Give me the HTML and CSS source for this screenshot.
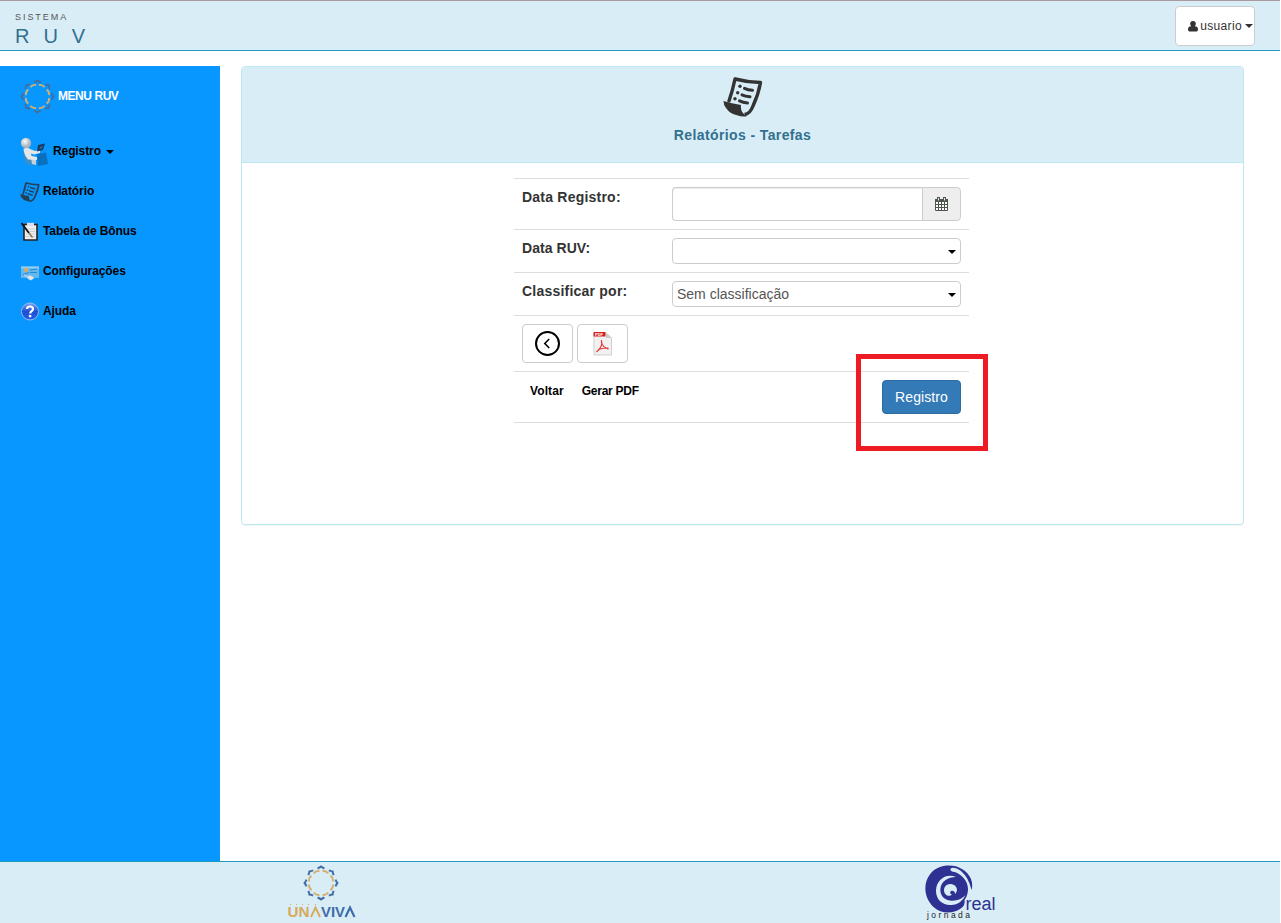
FILE: index.html
```html
<!DOCTYPE html>
<html lang="pt-BR">
<head>
<meta charset="utf-8">
<title>Sistema RUV</title>
<link rel="stylesheet" href="styles.css">
</head>
<body>
<svg class="defs" width="0" height="0" aria-hidden="true">
  <symbol id="ring" viewBox="-18 -18 36 36">
    <g fill="none">
      <g class="ring-blue">
        <path id="ob" d="M-3.400-14.500 Q-1-15.500 0-16.400 Q1-15.500 3.400-14.500"/>
        <use href="#ob" transform="rotate(45)"/><use href="#ob" transform="rotate(90)"/><use href="#ob" transform="rotate(135)"/><use href="#ob" transform="rotate(180)"/><use href="#ob" transform="rotate(225)"/><use href="#ob" transform="rotate(270)"/><use href="#ob" transform="rotate(315)"/>
      </g>
      <g class="ring-gold" transform="rotate(22.5)">
        <path id="ig" d="M-3.100-11.500 Q0-13.500 3.100-11.500"/>
        <use href="#ig" transform="rotate(45)"/><use href="#ig" transform="rotate(90)"/><use href="#ig" transform="rotate(135)"/><use href="#ig" transform="rotate(180)"/><use href="#ig" transform="rotate(225)"/><use href="#ig" transform="rotate(270)"/><use href="#ig" transform="rotate(315)"/>
      </g>
    </g>
  </symbol>
  <symbol id="scroll" viewBox="0 0 40 40">
    <path d="M12 2 Q24 5.200 37.500 5.500 Q35.500 17 30 29 Q27 37 21.500 37.500" fill="none" stroke="currentColor" stroke-width="3.400" stroke-linejoin="round"/>
    <path d="M12 2 Q9.500 14 6 24" fill="none" stroke="currentColor" stroke-width="3.400" stroke-linecap="round"/>
    <path d="M0.500 24 Q8 26.500 18 28 Q17 36 24 39 Q20 40.500 14 38.200 Q7 37 3 31 Q0.500 28 0.500 24Z" fill="currentColor"/>
    <path d="M21.500 11.300 Q25 13 29.500 13.300 M19 17.800 Q22 19.300 27 19.800 M16.500 23.800 Q20 25.500 24.500 26" fill="none" stroke="currentColor" stroke-width="3" stroke-linecap="round"/>
    <g fill="currentColor"><circle cx="17" cy="9.300" r="1.700"/><circle cx="14.700" cy="15.800" r="1.700"/><circle cx="12" cy="21.800" r="1.700"/></g>
  </symbol>
</svg>

<header class="topbar">
  <div class="brand">
    <div class="brand-small">SISTEMA</div>
    <div class="brand-big">R U V</div>
  </div>
  <button class="user">
    <svg width="10" height="11" viewBox="0 0 10 11"><path d="M5 0C7.200 0 8 1.500 7.800 3.100C7.700 4.200 7.200 4.900 6.800 5.300Q10 5.400 10 8.500Q10 10.500 8.500 10.500H1.500Q0 10.500 0 8.500Q0 5.400 3.200 5.300C2.800 4.900 2.300 4.200 2.200 3.100C2 1.500 2.800 0 5 0Z" fill="#333"/></svg>
    <span>usuario</span><i class="caret"></i>
  </button>
</header>

<div class="content">
  <nav class="sidebar">
    <a class="menu-title"><svg width="35" height="35"><use href="#ring"/></svg><span>MENU RUV</span></a>
    <a class="item registro">
      <svg width="30" height="30" viewBox="0 0 30 30">
        <defs><radialGradient id="skin" cx=".4" cy=".35"><stop offset="0" stop-color="#fff"/><stop offset="1" stop-color="#aab4bd"/></radialGradient></defs>
        <path d="M2 13 L6 27 L14 28 L13 23 L8 21Z" fill="#3d8fc8"/>
        <path d="M17 17 L26 15.500 L28 27 L18 29Z" fill="#0870bd"/>
        <path d="M11 21 L16 22 L16 28 L12 27Z" fill="#c7d0d7"/>
        <path d="M3.500 12 Q7 9.500 10 12 L15 14 L20 13 V16 L14 17.500 L11 16.500 L11.500 19 L17 20 V23 L8 22.500Q4 18 3.500 12Z" fill="#e4e7ea"/>
        <path d="M18 8 L25 6.500 L23 13 L17 14.500Z" fill="#1b3c60"/><path d="M20 9.800 L23 9 L22 11.500 L19.500 12Z" fill="#2f6590"/>
        <circle cx="6" cy="6" r="5.200" fill="url(#skin)"/>
      </svg>
      <span>Registro</span><i class="caret"></i>
    </a>
    <a class="item"><svg class="dark" width="20" height="20"><use href="#scroll"/></svg><span>Relatório</span></a>
    <a class="item"><svg width="20" height="20" viewBox="0 0 20 20">
      <path d="M4 2.500H17V18H4Z" fill="#eee" stroke="#222" stroke-width="1.600"/>
      <path d="M7 .8H14V4H7Z" fill="#dde"/><path d="M6 7H15M6 9.500H15M6 12H15M6 14.500H15" stroke="#ccd0d5"/>
      <path d="M1.500 1L9 11" stroke="#111" stroke-width="1.800"/><path d="M9 11L12.500 15.500" stroke="#8b7650" stroke-width="1.400"/>
    </svg><span>Tabela de Bônus</span></a>
    <a class="item"><svg width="20" height="20" viewBox="0 0 20 20">
      <path d="M1 4.500H19V16H1Z" fill="#65b8ed"/><path d="M1 4.500H19V6.500H1Z" fill="#8fcdf4"/>
      <circle cx="6" cy="8" r="1.900" fill="#e2ac46"/><path d="M10 8L17 7M10 10.500H17M3 12.500L9 10.500" stroke="#2489d0" stroke-width="1"/>
      <path d="M7 16Q7 14 10 13.500Q13 14 14 16.500L10.500 18.500Z" fill="#e0e5e8"/><path d="M4 13L8 15" stroke="#a9cde4" stroke-width="1.500"/>
    </svg><span>Configurações</span></a>
    <a class="item"><svg width="20" height="20" viewBox="0 0 20 20">
      <defs><linearGradient id="help" x2="0" y2="1"><stop offset="0" stop-color="#7ba6f5"/><stop offset=".5" stop-color="#1c4fd0"/><stop offset="1" stop-color="#235fe9"/></linearGradient></defs>
      <circle cx="10" cy="9.500" r="8.500" fill="url(#help)" stroke="#94b8ef"/>
      <path d="M7 7Q7 4.500 10 4.500Q13 4.500 13 7Q13 8.300 11.500 9.200Q10.200 10 10.200 11.500" fill="none" stroke="#fff" stroke-width="2.200"/><circle cx="10.100" cy="14.100" r="1.400" fill="#fff"/>
    </svg><span>Ajuda</span></a>
  </nav>

  <main class="main">
    <section class="panel">
      <div class="panel-heading">
        <svg width="40" height="40"><use href="#scroll"/></svg>
        <h1>Relatórios - Tarefas</h1>
      </div>
      <div class="panel-body">
        <div class="form">
          <div class="row"><label>Data Registro:</label>
            <div class="group"><div class="input"></div><div class="addon">
              <svg width="14" height="15" viewBox="0 0 14 15"><path d="M0.500 3.500H12.500V13.500H0.500Z" fill="#fff" stroke="#4c564c"/><path d="M0 2H13V5H0Z" fill="#4c564c"/><path d="M3.500 5V14M6.500 5V14M9.500 5V14M0 7.500H13M0 10.500H13" stroke="#4c564c"/><path d="M3.500 0V3.500M9.500 0V3.500" stroke="#4c564c" stroke-width="3"/><path d="M3.500 1V3.500M9.500 1V3.500" stroke="#eee"/></svg>
            </div></div>
          </div>
          <div class="row"><label class="short">Data RUV:</label><div class="select"><span></span><i class="arrow"></i></div></div>
          <div class="row"><label>Classificar por:</label><div class="select"><span>Sem classificação</span><i class="arrow"></i></div></div>
          <div class="row buttons">
            <button class="btn"><svg width="26" height="26" viewBox="0 0 26 26" fill="none" stroke="#000"><circle cx="12.500" cy="12.500" r="11.500" stroke-width="2"/><path d="M14.200 8L9.800 12.500L14.200 17" stroke-width="1.600"/></svg></button>
            <button class="btn"><svg width="26" height="26" viewBox="0 0 26 26">
              <path d="M4 2H16.500L21.500 7V24H4Z" fill="#f1f1f1" stroke="#d0d0d0"/><path d="M16 2V7H21.500Z" fill="#ccc"/>
              <path d="M3.500 1H15.500V5.500H3.500Z" fill="#d5211d"/><text x="5" y="4.800" class="pdf-label">PDF</text>
              <path d="M11.300 9Q12.500 12 11.200 15Q9.500 19 6.300 21M11.300 11Q12.300 16 18.500 18.200M8 18.800Q12 16.800 18.500 17" fill="none" stroke="#e23a3a" stroke-width="1.200"/>
            </svg></button>
          </div>
          <div class="row last">
            <div class="captions"><span>Voltar</span><span class="pdf-caption">Gerar PDF</span></div>
            <button class="primary">Registro<span class="highlight"></span></button>
          </div>
        </div>
      </div>
    </section>
  </main>
</div>

<footer class="footer">
  <svg class="logo-una" width="72" height="60" viewBox="0 0 72 60">
    <use href="#ring" x="16" y="3" width="36" height="36"/>
    <g class="una"><text x="0.500" y="55" textLength="22" lengthAdjust="spacingAndGlyphs" fill="#d6aa5d">UN</text><text x="34" y="55" textLength="24" lengthAdjust="spacingAndGlyphs" fill="#3e6da9">VIV</text></g>
    <path d="M24 55L28.500 45.500L33 55" fill="none" stroke="#d6aa5d" stroke-width="1.900"/>
    <path d="M58.500 55L63 45.500L67.500 55" fill="none" stroke="#3e6da9" stroke-width="2.200"/>
    <path d="M3 42.500H4M9 42.500H10M15 42.500H16M21 42.500H22M28 42.500H29" stroke="#d6aa5d"/>
  </svg>
  <svg class="logo-real" width="76" height="60" viewBox="0 0 76 60">
    <path d="M25.500 3.500C34 3.500 43 8 47 17C48.500 21 48.500 25 47.500 28Q45 16 37 9Q31 5 27.500 6Q25 7.800 28 9.500C38 11 44.500 20 44 28C43.500 33 42 36 40.500 38Q41.500 44 36 47C29 52 17 52 9.500 45C0 36-1 22 5.500 13C10.500 6 17 3.500 25.500 3.500Z" fill="#2e3192"/>
    <path d="M32 15C22 11 12 18 12 29C12 38 19 43.500 27 43C34 43 39.500 38 41.500 33C38 37 32 39.500 26 38.500C19 37.500 15.500 32 16.500 26C17.500 19 24 15 32 15Z" fill="#d9edf7"/>
    <path d="M30 23C25 20 20 23.500 20 28C20 33 25 35.500 28 32.500C26 32 25.500 30 27 29C29 28 31.500 30 31 32C34 29.500 33.500 25 30 23Z" fill="#d9edf7"/>
    <text x="41.500" y="48" class="real" textLength="30" lengthAdjust="spacingAndGlyphs">real</text>
    <text x="3" y="55.500" class="jornada" textLength="43">jornada</text>
  </svg>
</footer>
</body>
</html>
```
FILE: styles.css
```css
* { box-sizing: border-box; }
body {
  margin: 0; width: 1280px; height: 923px; background: #fff; color: #333;
  font: 14px/20px "Liberation Sans", Arial, sans-serif;
  display: flex; flex-direction: column; overflow: hidden;
}
svg { display: block; flex: none; }
.defs { position: absolute; }
button { font: inherit; color: inherit; padding: 0; margin: 0; }
.ring-blue { stroke: #426ea4; stroke-width: 2; }
.ring-gold { stroke: #d6af6e; stroke-width: 1.9; }

.topbar {
  height: 51px; flex: none; background: #d9edf7; border-top: 1px solid #a99a9e; border-bottom: 1px solid #2299bd;
  display: flex; justify-content: space-between; padding: 5px 25px 0 15px;
}
.brand-small { font-size: 9px; line-height: 12px; letter-spacing: 1.95px; color: #555; padding-top: 5px; }
.brand-big { font-size: 20px; line-height: 26px; letter-spacing: 4.2px; color: #31708f; }
.user {
  width: 80px; height: 40px; background: #fff; border: 1px solid #ccc; border-radius: 4px;
  display: flex; align-items: center; justify-content: flex-end; padding-right: 1px; font-size: 12px;
  letter-spacing: .35px; white-space: nowrap;
}
.user span { margin-left: 2px; }
.user .caret { margin-left: 3px; }
.caret { border: 4px solid transparent; border-top-color: currentColor; border-bottom: 0; margin-left: 2px; }

.content { flex: 1; display: flex; padding-top: 15px; min-height: 0; }
.sidebar { width: 220px; flex: none; background: #0897ff; color: #000; font-size: 12px; font-weight: bold; padding: 13px 0 0 20px; }
.menu-title { display: flex; align-items: center; color: #fff; height: 35px; gap: 3px; margin-bottom: 18px; letter-spacing: -.45px; }
.menu-title span { margin-top: -1px; }
.item { display: flex; align-items: center; height: 40px; gap: 3px; letter-spacing: -.1px; }
.item span { margin-top: -2px; }
.registro .caret { margin-left: 2px; }
.dark { color: #273f55; }

.main { flex: 1; padding: 0 36px 0 21px; }
.panel { height: 459px; border: 1px solid #bce8f1; border-radius: 4px; box-shadow: 0 1px 1px rgba(0,0,0,.05); }
.panel-heading {
  height: 96px; background: #d9edf7; border-bottom: 1px solid #bce8f1; border-radius: 3px 3px 0 0;
  display: flex; flex-direction: column; align-items: center; padding-top: 10px;
}
.panel-heading h1 { margin: 8px 0 0; font-size: 14px; line-height: 20px; letter-spacing: .39px; color: #31708f; }
.panel-body { padding: 15px 0 0 272px; }
.form { width: 455px; border-bottom: 1px solid #ddd; }
.row { border-top: 1px solid #ddd; padding: 8px; display: flex; align-items: flex-start; }
.row label { width: 150px; font-weight: bold; letter-spacing: .22px; }
.row .short { letter-spacing: .05px; }
.group { display: flex; width: 289px; height: 34px; }
.input { width: 250px; border: 1px solid #ccc; border-right: 0; border-radius: 4px 0 0 4px; box-shadow: inset 0 1px 1px rgba(0,0,0,.075); }
.addon { flex: 1; display: flex; align-items: center; justify-content: center; background: #eee; border: 1px solid #ccc; border-radius: 0 4px 4px 0; }
.select { width: 289px; height: 26px; border: 1px solid #ccc; border-radius: 4px; display: flex; align-items: center; justify-content: space-between; padding: 0 4px; color: #555; }
.arrow { border: 4px solid transparent; border-top-color: #000; border-bottom: 0; margin-top: 2px; }
.buttons { gap: 4px; }
.btn { width: 51px; height: 39px; background: #fff; border: 1px solid #ccc; border-radius: 4px; display: flex; align-items: center; justify-content: center; }
.pdf-label { font-size: 4px; font-weight: bold; fill: #fff; }
.last { justify-content: space-between; }
.captions { display: flex; gap: 18px; padding-left: 8px; color: #000; font-size: 12px; line-height: 22px; font-weight: bold; letter-spacing: .1px; }
.pdf-caption { letter-spacing: -.25px; }
.primary { position: relative; width: 79px; height: 34px; background: #337ab7; color: #fff; border: 1px solid #2e6da4; border-radius: 4px; letter-spacing: .1px; }
.highlight { position: absolute; left: -27px; top: -27px; width: 132px; height: 97px; border: 5px solid #ed1c24; }

.footer { height: 62px; flex: none; background: #d9edf7; border-top: 1px solid #2299bd; display: flex; padding-left: 287px; }
.logo-real { margin: 0 0 0 565px; }
.una { font-size: 14px; font-weight: bold; }
.real { font-size: 18px; fill: #2e3192; }
.jornada { font-size: 8.5px; fill: #222; }
```
